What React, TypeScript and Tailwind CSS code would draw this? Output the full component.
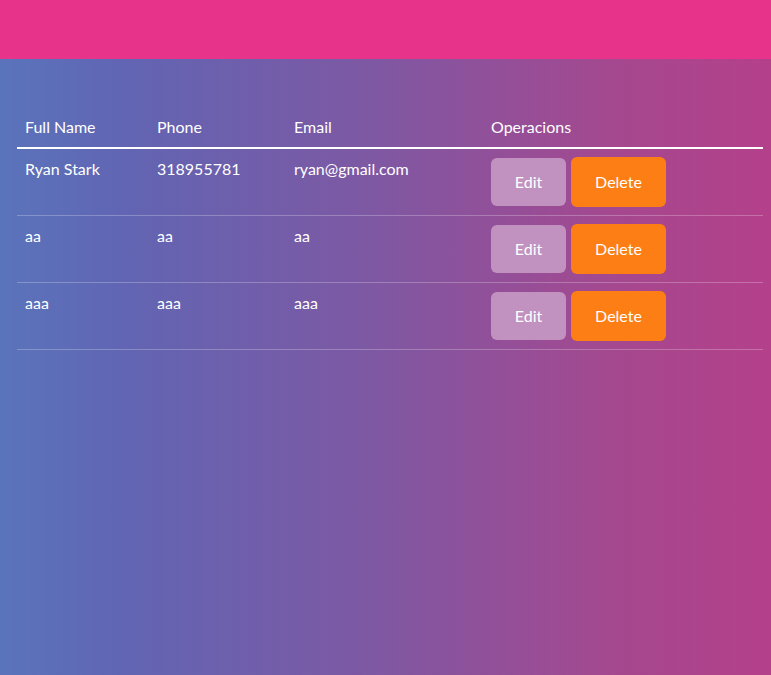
import React from "react";

const rows = [
  { name: "Ryan Stark", phone: "318955781", email: "ryan@gmail.com" },
  { name: "aa", phone: "aa", email: "aa" },
  { name: "aaa", phone: "aaa", email: "aaa" },
];

export default function App() {
  return (
    <div
      className="min-h-[675px] w-full text-white text-base"
      style={{ fontFamily: "Lato, 'Noto Sans', sans-serif" }}
    >
      <div className="h-[59px] bg-[#e8338a]" />
      <div className="min-h-[616px] bg-[linear-gradient(to_right,#5a74bb_0%,#6165b3_16%,#7e58a3_48%,#a5488f_80%,#b4408a_100%)] pt-12 px-[8px]">
        <table className="w-[746px] ml-[9px] border-collapse table-fixed">
          <thead>
            <tr className="border-b-2 border-white">
              <th className="w-[132px] px-2 py-2 text-left font-normal leading-6">Full Name</th>
              <th className="w-[137px] px-2 py-2 text-left font-normal leading-6">Phone</th>
              <th className="w-[197px] px-2 py-2 text-left font-normal leading-6">Email</th>
              <th className="px-2 py-2 text-left font-normal leading-6">Operacions</th>
            </tr>
          </thead>
          <tbody>
            {rows.map((r, i) => (
              <tr key={i} className="border-b border-white/25">
                <td className="px-2 py-2 align-top leading-6">{r.name}</td>
                <td className="px-2 py-2 align-top leading-6">{r.phone}</td>
                <td className="px-2 py-2 align-top leading-6">{r.email}</td>
                <td className="px-2 py-2 align-top">
                  <div className="flex items-center gap-[5px] h-[50px]">
                    <button className="w-[75px] h-[48px] rounded-[6px] bg-[#c192c0] text-white">Edit</button>
                    <button className="w-[95px] h-[50px] rounded-[6px] bg-[#fd7e14] text-white">Delete</button>
                  </div>
                </td>
              </tr>
            ))}
          </tbody>
        </table>
      </div>
    </div>
  );
}
